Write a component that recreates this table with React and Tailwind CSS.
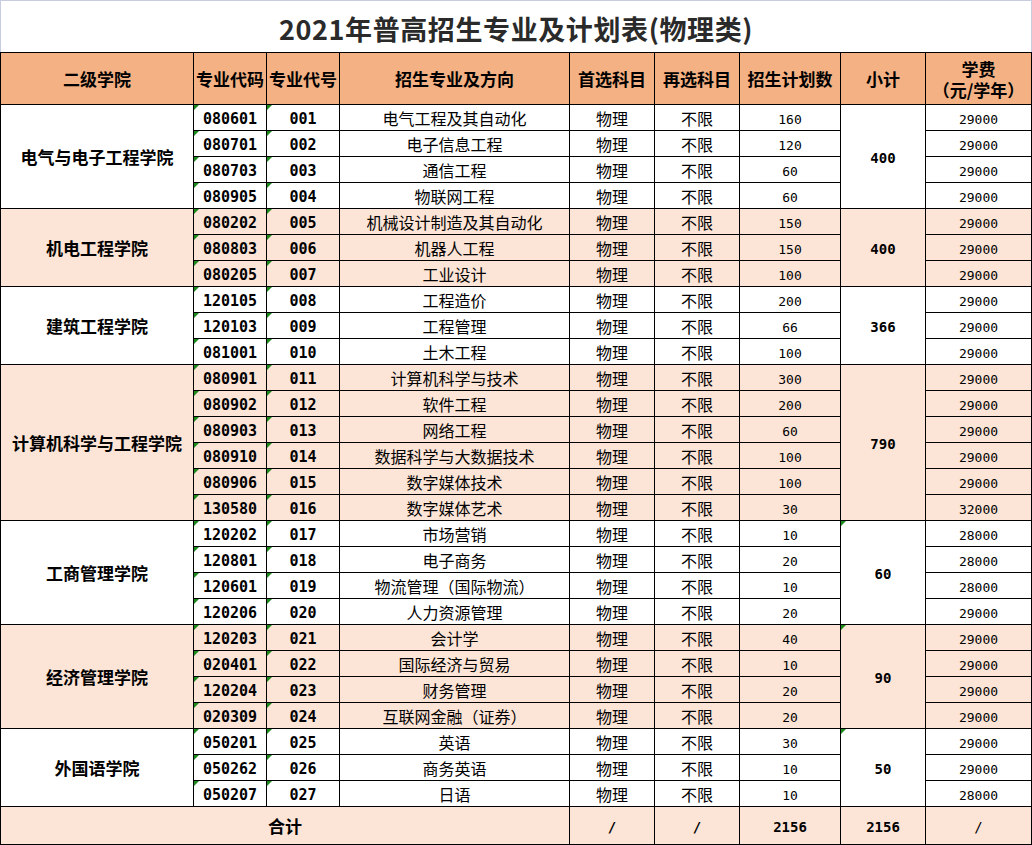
import React from 'react';

const cjk = "font-['Noto_Sans_CJK_SC',sans-serif]";
const mono = "font-['DejaVu_Sans_Mono','Noto_Sans_CJK_SC',monospace] pt-[3px]";

const groups = [
  {
    name: '电气与电子工程学院',
    total: 400,
    pink: false,
    mark: false,
    span: 'row-span-4',
    rows: [
      ['080601', '001', '电气工程及其自动化', 160, 29000],
      ['080701', '002', '电子信息工程', 120, 29000],
      ['080703', '003', '通信工程', 60, 29000],
      ['080905', '004', '物联网工程', 60, 29000],
    ],
  },
  {
    name: '机电工程学院',
    total: 400,
    pink: true,
    mark: false,
    span: 'row-span-3',
    rows: [
      ['080202', '005', '机械设计制造及其自动化', 150, 29000],
      ['080803', '006', '机器人工程', 150, 29000],
      ['080205', '007', '工业设计', 100, 29000],
    ],
  },
  {
    name: '建筑工程学院',
    total: 366,
    pink: false,
    mark: false,
    span: 'row-span-3',
    rows: [
      ['120105', '008', '工程造价', 200, 29000],
      ['120103', '009', '工程管理', 66, 29000],
      ['081001', '010', '土木工程', 100, 29000],
    ],
  },
  {
    name: '计算机科学与工程学院',
    total: 790,
    pink: true,
    mark: false,
    span: 'row-span-6',
    rows: [
      ['080901', '011', '计算机科学与技术', 300, 29000],
      ['080902', '012', '软件工程', 200, 29000],
      ['080903', '013', '网络工程', 60, 29000],
      ['080910', '014', '数据科学与大数据技术', 100, 29000],
      ['080906', '015', '数字媒体技术', 100, 29000],
      ['130580', '016', '数字媒体艺术', 30, 32000],
    ],
  },
  {
    name: '工商管理学院',
    total: 60,
    pink: false,
    mark: true,
    span: 'row-span-4',
    rows: [
      ['120202', '017', '市场营销', 10, 28000],
      ['120801', '018', '电子商务', 20, 28000],
      ['120601', '019', '物流管理（国际物流）', 10, 28000],
      ['120206', '020', '人力资源管理', 20, 29000],
    ],
  },
  {
    name: '经济管理学院',
    total: 90,
    pink: true,
    mark: true,
    span: 'row-span-4',
    rows: [
      ['120203', '021', '会计学', 40, 29000],
      ['020401', '022', '国际经济与贸易', 10, 29000],
      ['120204', '023', '财务管理', 20, 29000],
      ['020309', '024', '互联网金融（证券）', 20, 29000],
    ],
  },
  {
    name: '外国语学院',
    total: 50,
    pink: false,
    mark: true,
    span: 'row-span-3',
    rows: [
      ['050201', '025', '英语', 30, 29000],
      ['050262', '026', '商务英语', 10, 29000],
      ['050207', '027', '日语', 10, 28000],
    ],
  },
];

// little green "number stored as text" marker, like in Excel
const Mark = () => (
  <span className="absolute left-0 top-0 w-0 h-0 border-t-[5px] border-r-[5px] border-t-[#1d8a1d] border-r-transparent" />
);

const Cell = ({ className = '', children, mark }) => (
  <div className={`relative flex items-center justify-center border-r border-b border-black leading-none text-black ${className}`}>
    {mark && <Mark />}
    {children}
  </div>
);

const headers = ['二级学院', '专业代码', '专业代号', '招生专业及方向', '首选科目', '再选科目', '招生计划数', '小计'];

export default function App() {
  return (
    <div className="w-[1032px] h-[845px] bg-white">
      <div className="h-[52px] border-t border-l border-r border-[#c6cde0] flex items-center justify-center pt-[6px]">
        <h1 className={`${cjk} text-[27px] font-bold text-[#2a2a2a] tracking-[0.6px]`}>
          2021年普高招生专业及计划表(物理类)
        </h1>
      </div>

      <div className="grid grid-cols-[193px_73px_73px_230px_85px_85px_101px_85px_106px] grid-rows-[52px_repeat(27,26px)_38px] border-l border-t border-black">
        {headers.map((h) => (
          <Cell key={h} className={`${cjk} bg-[#f4b183] text-[17px] font-bold`}>
            {h}
          </Cell>
        ))}
        <Cell className={`${cjk} bg-[#f4b183] text-[17px] font-bold flex-col gap-[4px]`}>
          <span className="leading-[17px]">学费</span>
          <span className="leading-[17px]">（元/学年）</span>
        </Cell>

        {groups.map((g) => {
          const bg = g.pink ? 'bg-[#fce4d6]' : 'bg-white';
          return g.rows.map((r, i) => (
            <React.Fragment key={r[1]}>
              {i === 0 && (
                <Cell className={`${cjk} ${bg} ${g.span} text-[17px] font-bold`}>{g.name}</Cell>
              )}
              <Cell mark className={`${mono} ${bg} text-[15px] font-bold`}>{r[0]}</Cell>
              <Cell mark className={`${mono} ${bg} text-[15px] font-bold`}>{r[1]}</Cell>
              <Cell className={`${cjk} ${bg} text-[16px]`}>{r[2]}</Cell>
              <Cell className={`${cjk} ${bg} text-[16px]`}>物理</Cell>
              <Cell className={`${cjk} ${bg} text-[16px]`}>不限</Cell>
              <Cell className={`${mono} ${bg} text-[13px]`}>{r[3]}</Cell>
              {i === 0 && (
                <Cell mark={g.mark} className={`${mono} ${bg} ${g.span} text-[14px] font-bold`}>
                  {g.total}
                </Cell>
              )}
              <Cell className={`${mono} ${bg} text-[13px]`}>{r[4]}</Cell>
            </React.Fragment>
          ));
        })}

        {/* 合计 row */}
        <Cell className={`${cjk} bg-[#fce4d6] col-span-4 text-[17px] font-bold`}>合计</Cell>
        <Cell className={`${mono} bg-[#fce4d6] text-[14px] font-bold`}>/</Cell>
        <Cell className={`${mono} bg-[#fce4d6] text-[14px] font-bold`}>/</Cell>
        <Cell className={`${mono} bg-[#fce4d6] text-[14px] font-bold`}>2156</Cell>
        <Cell className={`${mono} bg-[#fce4d6] text-[14px] font-bold`}>2156</Cell>
        <Cell className={`${mono} bg-[#fce4d6] text-[14px]`}>/</Cell>
      </div>
    </div>
  );
}
